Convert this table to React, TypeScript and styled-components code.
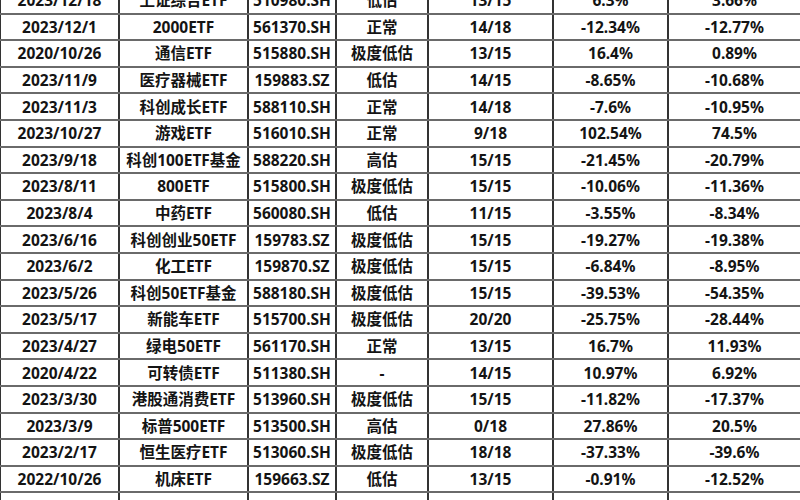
import * as React from 'react';
import styled, { createGlobalStyle } from 'styled-components';

const GlobalStyle = createGlobalStyle`
  html, body {
    margin: 0;
    padding: 0;
    background: #ffffff;
  }
`;

const Viewport = styled.div`
  width: 800px;
  height: 500px;
  overflow: hidden;
  background: #ffffff;
`;

const Table = styled.table`
  width: 801px;
  margin: -14px 0 0 -1px;
  border-collapse: collapse;
  table-layout: fixed;
  font-family: "Noto Sans", "Noto Sans CJK SC", sans-serif;
  font-weight: 700;
  font-size: 15.5px;
  color: #141414;
`;

const Row = styled.tr`
  height: 26.6px;
`;

const Cell = styled.td`
  padding: 0;
  height: 24.6px;
  text-align: center;
  vertical-align: middle;
  white-space: nowrap;
  line-height: 20px;
  border-top: 2px solid #6a6a6a;
  border-bottom: 2px solid #6a6a6a;
  border-left: 2px solid #333333;
  border-right: 2px solid #333333;
`;

const widths = [119, 129, 88, 92, 125, 115, 133];

type Fund = [string, string, string, string, string, string, string];

const rows: Fund[] = [
  ['2023/12/18', '上证综合ETF', '510980.SH', '低估', '13/15', '6.3%', '3.66%'],
  ['2023/12/1', '2000ETF', '561370.SH', '正常', '14/18', '-12.34%', '-12.77%'],
  ['2020/10/26', '通信ETF', '515880.SH', '极度低估', '13/15', '16.4%', '0.89%'],
  ['2023/11/9', '医疗器械ETF', '159883.SZ', '低估', '14/15', '-8.65%', '-10.68%'],
  ['2023/11/3', '科创成长ETF', '588110.SH', '正常', '14/18', '-7.6%', '-10.95%'],
  ['2023/10/27', '游戏ETF', '516010.SH', '正常', '9/18', '102.54%', '74.5%'],
  ['2023/9/18', '科创100ETF基金', '588220.SH', '高估', '15/15', '-21.45%', '-20.79%'],
  ['2023/8/11', '800ETF', '515800.SH', '极度低估', '15/15', '-10.06%', '-11.36%'],
  ['2023/8/4', '中药ETF', '560080.SH', '低估', '11/15', '-3.55%', '-8.34%'],
  ['2023/6/16', '科创创业50ETF', '159783.SZ', '极度低估', '15/15', '-19.27%', '-19.38%'],
  ['2023/6/2', '化工ETF', '159870.SZ', '极度低估', '15/15', '-6.84%', '-8.95%'],
  ['2023/5/26', '科创50ETF基金', '588180.SH', '极度低估', '15/15', '-39.53%', '-54.35%'],
  ['2023/5/17', '新能车ETF', '515700.SH', '极度低估', '20/20', '-25.75%', '-28.44%'],
  ['2023/4/27', '绿电50ETF', '561170.SH', '正常', '13/15', '16.7%', '11.93%'],
  ['2020/4/22', '可转债ETF', '511380.SH', '-', '14/15', '10.97%', '6.92%'],
  ['2023/3/30', '港股通消费ETF', '513960.SH', '极度低估', '15/15', '-11.82%', '-17.37%'],
  ['2023/3/9', '标普500ETF', '513500.SH', '高估', '0/18', '27.86%', '20.5%'],
  ['2023/2/17', '恒生医疗ETF', '513060.SH', '极度低估', '18/18', '-37.33%', '-39.6%'],
  ['2022/10/26', '机床ETF', '159663.SZ', '低估', '13/15', '-0.91%', '-12.52%'],
  ['', '', '', '', '', '', ''],
];

export default function App() {
  return (
    <Viewport>
      <GlobalStyle />
      <Table>
        <colgroup>
          {widths.map((w, i) => (
            <col key={i} style={{ width: w }} />
          ))}
        </colgroup>
        <tbody>
          {rows.map((r, i) => (
            <Row key={i}>
              {r.map((v, j) => (
                <Cell key={j}>{v}</Cell>
              ))}
            </Row>
          ))}
        </tbody>
      </Table>
    </Viewport>
  );
}
